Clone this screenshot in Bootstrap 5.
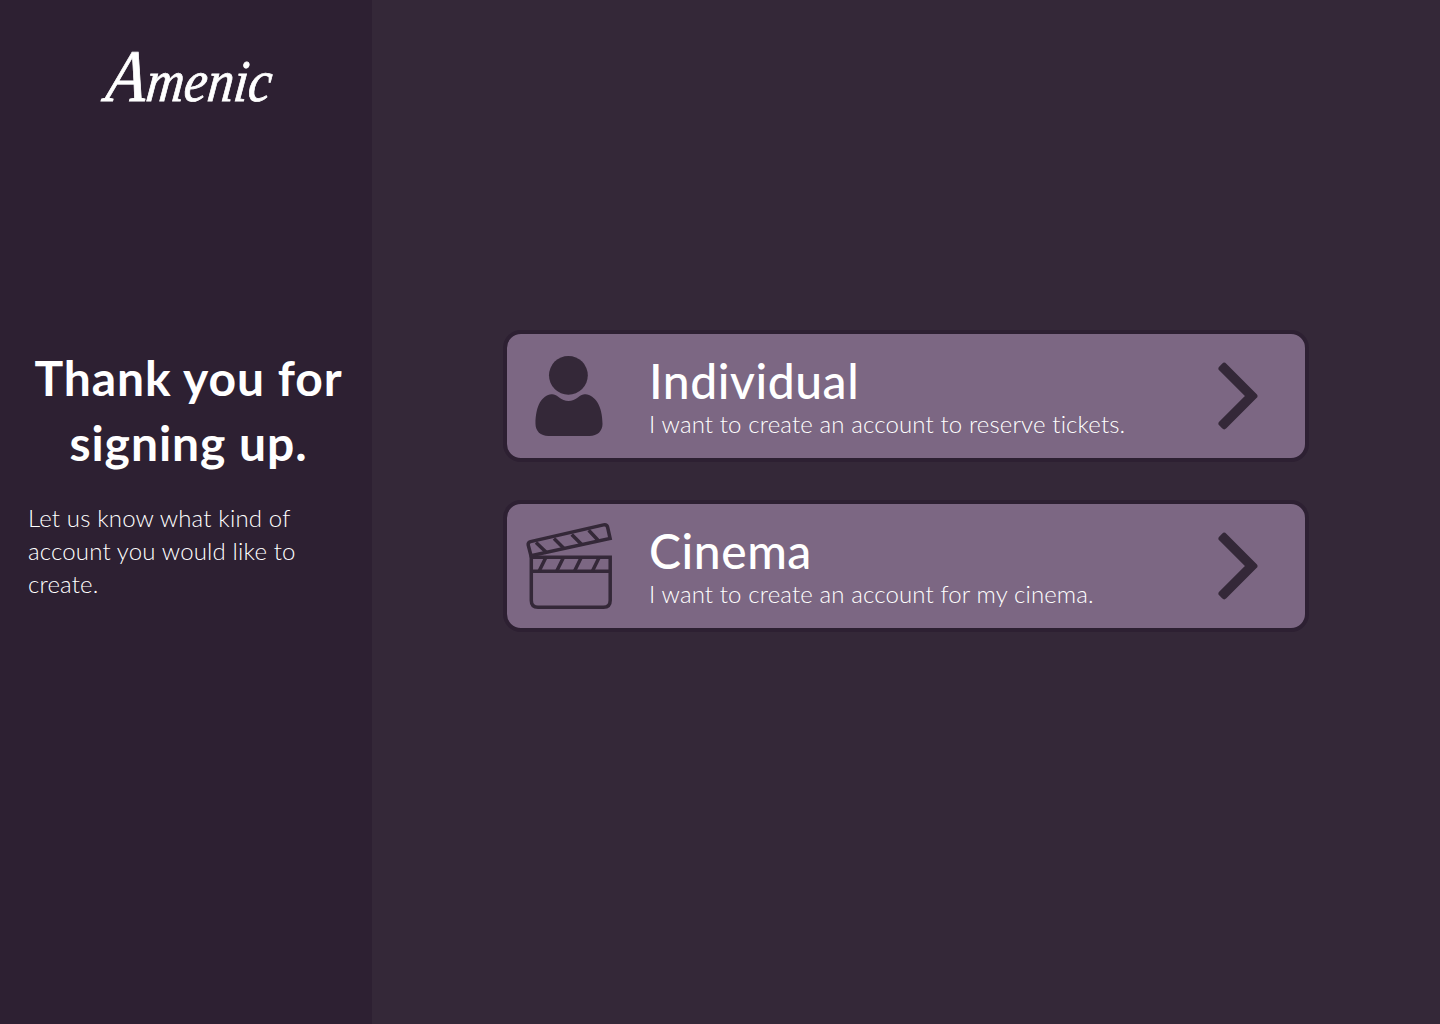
<!DOCTYPE html>
<html lang="en">
<head>
<meta charset="utf-8">
<meta name="viewport" content="width=device-width, initial-scale=1">
<title>Amenic – Sign up</title>
<link href="https://cdn.jsdelivr.net/npm/bootstrap@5.3.0/dist/css/bootstrap.min.css" rel="stylesheet">
<style>
body{background:#342838;font-family:Lato,"Open Sans",sans-serif;color:#fff}
.side-panel{width:372px;background:#2d2032;padding:40px 28px 0}
.brand-name{font:italic 500 59px/72px "Liberation Serif",serif;height:72px;margin-left:8px;transform:scaleX(.89) skewX(-7deg);-webkit-text-stroke:.8px #fff}
.brand-name::first-letter{font-size:74px;line-height:72px}
.welcome{font-size:48px;line-height:65px;font-weight:700;letter-spacing:.95px;margin:233px -13px 0 -8px}
.hint{font-size:24px;line-height:33px;font-weight:300;margin-top:26px;letter-spacing:.16px}
.choices{padding:330px 131px 0;gap:38px}
.choice{height:132px;border:4px solid #2d2032;border-radius:18px;background:#7c6783;color:#fff;padding:0 41px 0 16px}
.choice-icon{width:92px;height:92px;color:#342838}
.choice-text{margin-left:34px;padding-top:4px}
.choice-title{font-size:48px;line-height:50px;font-weight:500;letter-spacing:.55px}
.choice-note{font-size:24px;line-height:33px;font-weight:300;letter-spacing:.13px;padding-top:1px}
.chevron{width:52px;height:76px;color:#342838}
</style>
</head>
<body>
<div class="d-flex vh-100 overflow-hidden">
  <aside class="side-panel flex-shrink-0">
    <div class="brand-name text-center">Amenic</div>
    <h1 class="welcome text-center">Thank you for<br>signing up.</h1>
    <p class="hint mb-0">Let us know what kind of<br>account you would like to<br>create.</p>
  </aside>
  <main class="choices flex-grow-1 d-flex flex-column">
    <a href="#" class="choice d-flex align-items-center text-decoration-none">
      <svg class="choice-icon flex-shrink-0" viewBox="0 0 92 92" fill="currentColor" aria-hidden="true">
        <circle cx="45.4" cy="25.3" r="19.4"/>
        <path d="M28.5 44.3C31 44.1 33 45 35.5 47Q45.5 54.8 55.5 47C58 45 60 44.1 62.5 44.3C72 45.5 79.5 55.5 79.5 74C79.5 81 74.500 86 66.500 86H25.500C17.500 86 12.500 81 12.500 74C12.500 55.500 19 45.500 28.500 44.300Z"/>
      </svg>
      <div class="choice-text flex-grow-1 text-nowrap">
        <div class="choice-title">Individual</div>
        <div class="choice-note">I want to create an account to reserve tickets.</div>
      </div>
      <svg class="chevron flex-shrink-0" viewBox="0 0 52 76" fill="currentColor" stroke="currentColor" stroke-width="6" stroke-linejoin="round" aria-hidden="true"><path d="M12.200 7.800L42.400 38L12.200 68.200L9.500 65.500L37 38L9.500 10.500Z"/></svg>
    </a>
    <a href="#" class="choice d-flex align-items-center text-decoration-none">
      <svg class="choice-icon flex-shrink-0" viewBox="0 0 92 92" fill="none" stroke="currentColor" stroke-width="3.5" aria-hidden="true">
        <path d="M8.300 37.300H87.200V80.500Q87.200 87.200 80.500 87.200H15Q8.300 87.200 8.300 80.500ZM8.300 51.300H87.200"/>
        <path d="M22.700 37.700L16.300 50.700M40.300 37.700L33.900 50.700M58.100 37.700L51.700 50.700M76 37.700L69.600 50.700"/>
        <path d="M8 35.700L5.200 25Q4.800 22.300 7.500 21.600L80.500 4.900Q83.800 4.200 84.600 7.200L87.100 18.500Z"/>
        <path d="M13 22.500L24 33M31 18.500L41 28.600M48.700 14.500L58.700 24.500M65.700 10.300L75.500 20.800"/>
      </svg>
      <div class="choice-text flex-grow-1 text-nowrap">
        <div class="choice-title">Cinema</div>
        <div class="choice-note">I want to create an account for my cinema.</div>
      </div>
      <svg class="chevron flex-shrink-0" viewBox="0 0 52 76" fill="currentColor" stroke="currentColor" stroke-width="6" stroke-linejoin="round" aria-hidden="true"><path d="M12.200 7.800L42.400 38L12.200 68.200L9.500 65.500L37 38L9.500 10.500Z"/></svg>
    </a>
  </main>
</div>
<script src="https://cdn.jsdelivr.net/npm/bootstrap@5.3.0/dist/js/bootstrap.bundle.min.js"></script>
</body>
</html>
